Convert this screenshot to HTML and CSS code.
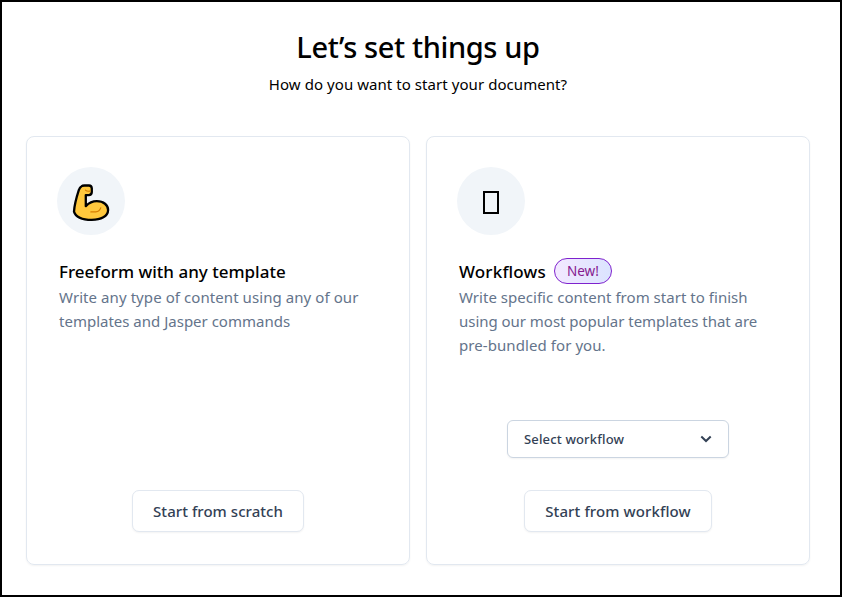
FILE: index.html
```html
<!DOCTYPE html>
<html lang="en">
	<head>
		<meta charset="utf-8" />
		<title>Let’s set things up</title>
		<link rel="stylesheet" href="styles.css">
	</head>
	<body>
		<main class="setup">
			<header class="intro">
				<h1 class="title">Let’s set things up</h1>
				<p class="subtitle">How do you want to start your document?</p>
			</header>
			<div class="cards">
				<section class="card">
					<div class="icon">
						<svg class="arm" viewBox="0 0 46 46" width="46" height="46">
							<path d="M13.6 6.3Q14.4 5.5 16.6 5.5H21Q23.6 5.6 23.8 8.4V12.2Q23.6 15 20.8 15.1H17.8V26.2Q22.6 21.2 28.8 21.2C35.6 21.2 40.1 25.1 40.1 29.9C40 36.2 33 39.9 23.8 39.9C15.5 39.9 7.8 37.4 6 31.6C6.4 25 8.6 17 10.8 10.2Q11.8 7.2 13.6 6.3Z" fill="#ffc83d" stroke="#000" stroke-width="2.3" stroke-linejoin="round" />
							<path d="M17.4 10.2Q19 11.7 22 11.1M22.8 31.9H27.8Q31.5 31.6 32.8 27.8" fill="none" stroke="#d67d00" stroke-width="1.1" stroke-linecap="round" />
						</svg>
					</div>
					<div class="text">
						<h2 class="name">Freeform with any template</h2>
						<p class="description">
							<span class="loose">Write any type of content using any of our</span><br>
							templates and Jasper commands
						</p>
					</div>
					<div class="actions">
						<button class="button button-scratch">Start from scratch</button>
					</div>
				</section>
				<section class="card">
					<div class="icon"><span class="glyph-box"></span></div>
					<div class="text">
						<h2 class="name name-workflows">Workflows <span class="badge">New!</span></h2>
						<p class="description">
							<span class="slightly-loose">Write specific content from start to finish</span><br>
							<span class="tight">using our most popular templates that are</span><br>
							<span class="loose">pre-bundled for you.</span>
						</p>
					</div>
					<div class="actions">
						<button class="select">
							<span>Select workflow</span>
							<svg class="chevron" viewBox="0 0 12 8" width="12" height="8">
								<path d="M1.3 1.5L6 6L10.7 1.5" fill="none" stroke="#334155" stroke-width="2" />
							</svg>
						</button>
						<button class="button button-workflow">Start from workflow</button>
					</div>
				</section>
			</div>
		</main>
	</body>
</html>
```
FILE: styles.css
```css
* {
	box-sizing: border-box;
}
body {
	margin: 0;
	background: #fff;
	color: #000;
	font-family: 'Noto Sans', 'Open Sans', sans-serif;
	font-size: 16px;
	line-height: 24px;
}
h1, h2, p {
	margin: 0;
}
.setup {
	height: 597px;
	padding: 25px 30px 0 24px;
	border: 2px solid #000;
}
.intro {
	height: 109px;
	text-align: center;
}
.title {
	font-size: 29px;
	font-weight: 500;
	letter-spacing: -0.38px;
	line-height: 40px;
}
.subtitle {
	margin-top: 5px;
	font-size: 15px;
	letter-spacing: 0.06px;
	white-space: nowrap;
}
.cards {
	display: flex;
	gap: 16px;
}
.card {
	display: flex;
	flex-direction: column;
	width: 384px;
	height: 429px;
	padding: 30px 30px 32px;
	border: 1px solid #e2e8f0;
	border-radius: 8px;
	box-shadow: 0 1px 2px rgba(0, 0, 0, 0.05);
}
.icon {
	display: flex;
	align-items: center;
	justify-content: center;
	width: 68px;
	height: 68px;
	border-radius: 50%;
	background: #f1f5f9;
}
.glyph-box {
	width: 16px;
	height: 23px;
	margin-top: 3px;
	border: 2px solid #000;
}
.arm {
	display: block;
	margin-top: 4px;
}
.text {
	padding: 23px 0 0 2px;
}
.name {
	display: flex;
	align-items: center;
	height: 27px;
	font-size: 17px;
	font-weight: 500;
	white-space: nowrap;
}
.name-workflows {
	letter-spacing: 0.16px;
}
.badge {
	width: 58px;
	height: 26px;
	margin: -1px 0 0 8px;
	border: 1px solid #7e22ce;
	border-radius: 13px;
	background: linear-gradient(90deg, #f3e8ff, #dbe4ff);
	color: #86198f;
	font-size: 13.5px;
	font-weight: 400;
	letter-spacing: 0;
	line-height: 24px;
	text-align: center;
}
.description {
	color: #64748b;
	font-size: 15px;
	white-space: nowrap;
}
.loose {
	letter-spacing: 0.075px;
}
.slightly-loose {
	letter-spacing: 0.03px;
}
.tight {
	letter-spacing: -0.03px;
}
.actions {
	display: flex;
	flex-direction: column;
	align-items: center;
	gap: 32px;
	margin-top: auto;
}
.button, .select {
	padding: 0;
	border: 1px solid #e2e8f0;
	border-radius: 7px;
	background: #fff;
	box-shadow: 0 1px 2px rgba(0, 0, 0, 0.05);
	color: #334155;
	font-family: inherit;
	font-weight: 500;
	white-space: nowrap;
}
.button {
	height: 42px;
	font-size: 15px;
}
.button-scratch {
	width: 172px;
	letter-spacing: 0.05px;
}
.button-workflow {
	width: 188px;
	letter-spacing: 0.1px;
}
.select {
	display: flex;
	align-items: center;
	justify-content: space-between;
	width: 222px;
	height: 38px;
	padding: 0 16px;
	border-color: #cbd5e1;
	border-radius: 6px;
	font-size: 13px;
	letter-spacing: 0.15px;
}
```
